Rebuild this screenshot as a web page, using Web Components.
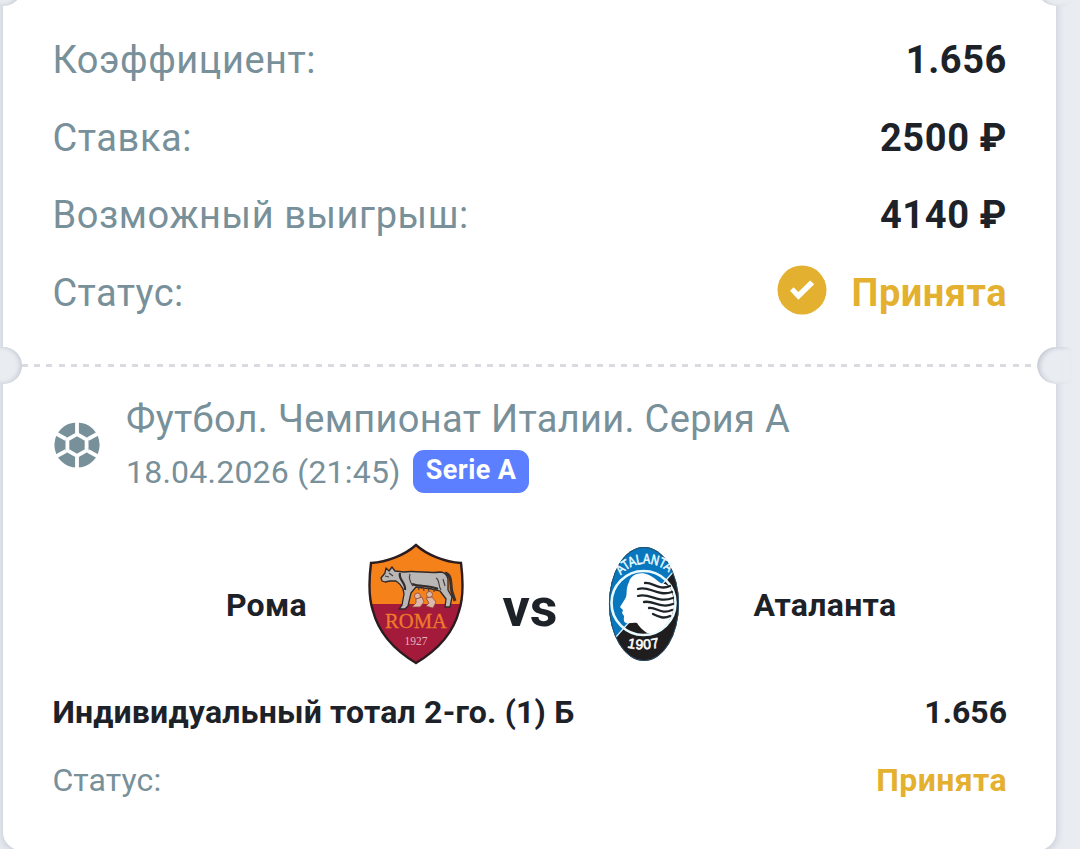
<!DOCTYPE html>
<html lang="ru">
<head>
<meta charset="utf-8">
<title>Купон</title>
<style>
html,body{margin:0;height:849px;overflow:hidden;background:#e9ecf1}
body{font-family:Roboto,"Liberation Sans",sans-serif;color:#1d2229}
</style>
</head>
<body>
<bet-ticket>
  <div slot="summary">
    <bet-row label="Коэффициент:" style="--ls:.55px;--vls:.6px">1.656</bet-row>
    <bet-row label="Ставка:" style="--ls:.6px;--vls:.6px">2500 ₽</bet-row>
    <bet-row label="Возможный выигрыш:" style="--ls:.58px;--vls:.6px">4140 ₽</bet-row>
    <bet-row label="Статус:" style="--ls:.4px;--vls:.5px;--value:#e4b02f"><check-icon></check-icon>Принята</bet-row>
  </div>
  <div slot="event">
    <event-head badge="Serie A" date="18.04.2026 (21:45)">Футбол. Чемпионат Италии. Серия А</event-head>
    <match-teams home="Рома" away="Аталанта"></match-teams>
    <bet-row label="Индивидуальный тотал 2-го. (1) Б" style="--h:68px;--fs:32px;--vfs:32px;--label:#1d2229;--lw:700;--ls:.2px;--vls:0px">1.656</bet-row>
    <bet-row label="Статус:" style="--h:68px;--fs:32px;--vfs:32px;--value:#e4b02f;--ls:.1px;--vls:.4px">Принята</bet-row>
  </div>
</bet-ticket>
<script>
const define=(name,html)=>customElements.define(name,class extends HTMLElement{
  connectedCallback(){
    if(this.shadowRoot)return;
    const t=document.createElement('template');
    t.innerHTML=html;
    this.attachShadow({mode:'open'}).append(t.content.cloneNode(true));
    this.shadowRoot.querySelectorAll('[data-attr]').forEach(e=>e.textContent=this.getAttribute(e.dataset.attr));
  }
});

define('check-icon',`<style>:host{display:block;white-space:normal;width:50px;height:50px;margin:-6px 24.5px 0 0}svg{display:block}</style>
<svg width="50" height="50" viewBox="0 0 50 50"><circle cx="25" cy="25" r="24.5" fill="#e4b02f"/><path d="M13 25.8 16.6 22.2 21.4 27 33.1 15.4 37.2 19.2 21.4 34.7Z" fill="#fff"/></svg>`);

define('bet-row',`<style>
:host{display:flex;align-items:center;justify-content:space-between;height:var(--h,77.6px)}
.l{font-size:var(--fs,38px);font-weight:var(--lw,400);color:var(--label,#78909a);letter-spacing:var(--ls,0);white-space:pre;margin-left:-.6px}
.v{display:flex;align-items:center;font-size:var(--vfs,38px);font-weight:700;color:var(--value,#1d2229);letter-spacing:var(--vls,0);white-space:pre}
</style><span class="l" data-attr="label"></span><span class="v"><slot></slot></span>`);

define('ball-icon',`<style>:host{display:block;width:46px;height:46px}svg{display:block}</style>
<svg width="46" height="46" viewBox="0 0 46 46"><circle cx="23" cy="23" r="22.6" fill="#78909a"/>
<path d="M23 0V11M23 35V46M34 17 45 11M34 29 45 35M12 17 1 11M12 29 1 35" stroke="#fff" stroke-width="3.8"/>
<path d="M23 12.2 32.6 17.7V28.3L23 33.8 13.4 28.3V17.7Z" fill="#78909a" stroke="#fff" stroke-width="3.8"/></svg>`);

define('event-head',`<style>
:host{display:flex;align-items:flex-start;height:112px}
ball-icon{margin:28px 26.4px 0 .6px}
.t{font-size:38px;line-height:50px;color:#78909a;letter-spacing:.32px;white-space:pre}
.s{display:flex;align-items:center;gap:12.5px;height:43px;margin-top:6px}
.d{font-size:32px;line-height:43px;color:#78909a;letter-spacing:.23px;padding-top:2px}
.b{box-sizing:border-box;width:116px;height:43px;border-radius:11px;background:#5c7fff;color:#fff;font-weight:700;font-size:27px;letter-spacing:.4px;line-height:41px;text-align:center}
</style><ball-icon></ball-icon><div><div class="t"><slot></slot></div><div class="s"><span class="d" data-attr="date"></span><span class="b" data-attr="badge"></span></div></div>`);

define('roma-crest',`<style>:host{display:block}svg{display:block}text{font-family:"Liberation Serif",serif;font-weight:400}</style>
<svg width="96" height="122" viewBox="0 0 96 122">
<defs><clipPath id="c"><path d="M48 2C37 12 19 19 3 20C1 36 1 56 5 68C11 91 28 108 48 120C68 108 85 91 91 68C95 56 95 36 93 20C77 19 59 12 48 2Z"/></clipPath></defs>
<g clip-path="url(#c)"><rect width="96" height="62" fill="#f5811a"/><rect y="61" width="96" height="61" fill="#a41a3a"/></g>
<path d="M48 2C37 12 19 19 3 20C1 36 1 56 5 68C11 91 28 108 48 120C68 108 85 91 91 68C95 56 95 36 93 20C77 19 59 12 48 2Z" fill="none" stroke="#2b1c20" stroke-width="2.4"/>
<path d="M77 30C85 32 82 43 84 49L87 58" fill="none" stroke="#39302f" stroke-width="3"/>
<path d="M13 35 17 30 18 25 21 28 24 24 27 28 36 29C47 27 62 31 72 29C78 29 81 35 80 40L80 47 84 54 82 64 77 64 78 56 72 48C65 46 61 45 56 45L48 44 43 50 40 63 37 66 31 66 34 62 36 51 35 46C33 41 31 40 28 38L22 38 17 39 14 38Z" fill="#bab8b6" stroke="#302828" stroke-width="1.3" stroke-linejoin="round"/>
<path d="M32 30C30 37 38 39 37 47" fill="none" stroke="#332a2a" stroke-width="2.2"/>
<path d="M44 41C52 44 62 42 70 46" fill="none" stroke="#332a2a" stroke-width="2.2"/>
<path d="M50 43 51 47M55 43 56 48M60 44 61 49M66 44 66 49M42 31C40 37 43 40 45 43M68 35C72 37 70 43 73 47M75 36 77 43M21 30 25 33M17 33 21 34" fill="none" stroke="#4b403f" stroke-width="1.2"/>
<g fill="#dcb9a8" stroke="#8c4a40" stroke-width=".8"><circle cx="49.5" cy="53" r="3"/><path d="M48 56 54 54 56 59 52 64 44 64 48 60Z"/><circle cx="61.5" cy="51.5" r="3"/><path d="M58 55 64 54 68 59 65 65 58 63 61 60Z"/></g>
<text x="48" y="85" text-anchor="middle" font-size="21.5" fill="#ee7a2c" stroke="#ee7a2c" stroke-width=".3" textLength="62" lengthAdjust="spacingAndGlyphs">ROMA</text>
<text x="48" y="102" text-anchor="middle" font-size="11.5" fill="#e2b5bd" textLength="23">1927</text>
</svg>`);

define('atalanta-crest',`<style>:host{display:block}svg{display:block}text{font-family:"Liberation Sans",sans-serif;font-weight:400}</style>
<svg width="72" height="116" viewBox="0 0 72 116">
<defs><clipPath id="e"><ellipse cx="36" cy="58" rx="35" ry="57"/></clipPath></defs>
<g clip-path="url(#e)"><rect width="72" height="116" fill="#1f1d1e"/><path d="M0 0H72L66 25 8 91 0 98Z" fill="#0877be"/><path d="M66 25 8 91" stroke="#dcefff" stroke-width="1.2"/></g>
<ellipse cx="36" cy="58" rx="34.6" ry="56.6" fill="none" stroke="#26506c" stroke-width="1"/>
<circle cx="35.5" cy="57" r="32" fill="none" stroke="#e9fbff" stroke-width="2.6"/>
<path d="M21 36C23 28 33 25 41 29C49 33 51 38 57 38L62 41 65 50 66 61C64 72 59 80 50 85C46 87 42 88 39 87C34 84 31 80 29 77C25 76 22 78 18 77C15 76 16 72 16 70L14 67 15 64 12 61 17 53C20 49 17 44 21 36Z" fill="#fff"/>
<g fill="none" stroke="#1e2529" stroke-width="2.3" stroke-linecap="round"><path d="M37 37C45 36 51 45 62 40"/><path d="M30 43C41 39 49 51 64 46"/><path d="M30 50C42 46 49 58 65 52"/><path d="M36 56C46 54 52 63 65 58"/><path d="M41 62C49 61 53 69 64 64"/><path d="M45 68C51 71 56 73 62 70"/></g>
<path id="a" d="M13 29A33 33 0 0 1 61 27" fill="none"/>
<text font-size="14" fill="#e9fbff" stroke="#e9fbff" stroke-width=".6"><textPath href="#a" textLength="53" lengthAdjust="spacingAndGlyphs">ATALANTA</textPath></text>
<path id="b" d="M18 101Q36 106 56 100" fill="none"/>
<text font-size="14" fill="#fff" stroke="#fff" stroke-width=".6"><textPath href="#b" startOffset="1" textLength="33">1907</textPath></text>
</svg>`);

define('match-teams',`<style>
:host{display:grid;grid-template-columns:292px 142px 86px 142.5px 1fr;align-items:center;height:124px;margin:35.5px 0 12.5px;font-weight:700}
.n{font-size:32px;letter-spacing:.3px;padding-top:2px}.h{text-align:right;padding-right:38px}.a{padding-left:38px}
.vs{font-size:54px;text-align:center;padding-top:8px}
roma-crest,atalanta-crest{justify-self:center}
</style><span class="n h" data-attr="home"></span><roma-crest></roma-crest><span class="vs">vs</span><atalanta-crest></atalanta-crest><span class="n a" data-attr="away"></span>`);

define('bet-ticket',`<style>
:host{display:flex;flex-direction:column;position:relative;box-sizing:border-box;width:1053px;height:850px;margin-left:3px;padding:21.3px 49px 0 50px;background:#fff;border-radius:0 0 18px 18px;box-shadow:0 2px 9px #9ca6b48c}
.line{height:3px;margin:32.5px -25px 27px -31px;background:repeating-linear-gradient(90deg,#d9dbe1 0 6px,transparent 6px 12.23px)}
.n{position:absolute;width:37px;height:37px;border-radius:50%;background:#e9ecf1;box-sizing:border-box}
.l{left:-18.5px;box-shadow:inset -2px 0 4px #aab1bd90}.r{right:-26px;width:45px;border-radius:19px;box-shadow:inset 3px 1px 4px #aab1bd90;-webkit-mask:linear-gradient(90deg,#000 50%,transparent 85%)}
.t{top:-31px}.m{top:347px}
</style><slot name="summary"></slot><div class="line"></div><slot name="event"></slot>
<i class="n l t"></i><i class="n r t"></i><i class="n l m"></i><i class="n r m"></i>`);
</script>
</body>
</html>
